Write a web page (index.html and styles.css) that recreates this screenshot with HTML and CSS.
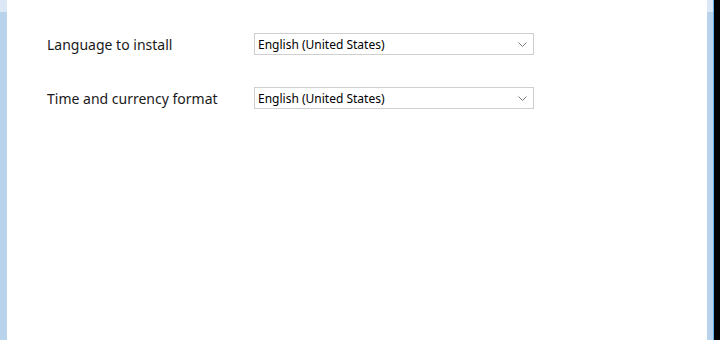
FILE: index.html
```html
<!DOCTYPE html>
<html lang="en">
<head>
    <meta charset="UTF-8">
    <title>Windows Setup</title>
    <link rel="stylesheet" href="styles.css">
</head>
<body>
    <div id="window">
        <div class="frame-left"></div>

        <main class="content">
            <div class="field-row">
                <span class="field-label">Language to install</span>
                <div class="combo">
                    <span>English (United States)</span>
                    <svg class="combo-arrow" width="9" height="5" viewBox="0 0 9 5"><path d="M0.5 0.5 L4.5 4.5 L8.5 0.5" fill="none" stroke="#7a7a7a" stroke-width="1"/></svg>
                </div>
            </div>

            <div class="field-row">
                <span class="field-label">Time and currency format</span>
                <div class="combo">
                    <span>English (United States)</span>
                    <svg class="combo-arrow" width="9" height="5" viewBox="0 0 9 5"><path d="M0.5 0.5 L4.5 4.5 L8.5 0.5" fill="none" stroke="#7a7a7a" stroke-width="1"/></svg>
                </div>
            </div>
        </main>

        <div class="frame-right"></div>
        <div class="desktop"></div>
    </div>
</body>
</html>
```

FILE: styles.css
```css
html, body {
    margin: 0;
    height: 100%;
}

body {
    font-family: 'Segoe UI', 'Noto Sans', 'DejaVu Sans', sans-serif;
    color: #000;
    background: #fff;
}

#window {
    display: flex;
    height: 340px;
}

.frame-left {
    width: 7px;
    background: linear-gradient(#dce8f5 0, #dce8f5 12px, #bad3ec 12px);
}

.frame-right {
    width: 6px;
    background: linear-gradient(#dce8f5 0, #dce8f5 12px, #bad3ec 12px);
    border-right: 1px solid #62b0ea;
}

.desktop {
    width: 6px;
    background: #000;
}

.content {
    flex: 1;
    background: #fff;
    padding: 33px 0 0 40px;
}

.field-row {
    display: flex;
    align-items: center;
    margin-bottom: 32px;
}

.field-label {
    width: 207px;
    font-size: 14px;
    color: #1a1a1a;
}

.combo {
    width: 269px;
    height: 20px;
    border: 1px solid #cfcfcf;
    display: flex;
    align-items: center;
    justify-content: space-between;
    padding: 0 6px 0 3px;
    box-sizing: content-box;
    font-size: 12px;
    color: #000;
}

.combo-arrow {
    margin-top: 1px;
}
```
